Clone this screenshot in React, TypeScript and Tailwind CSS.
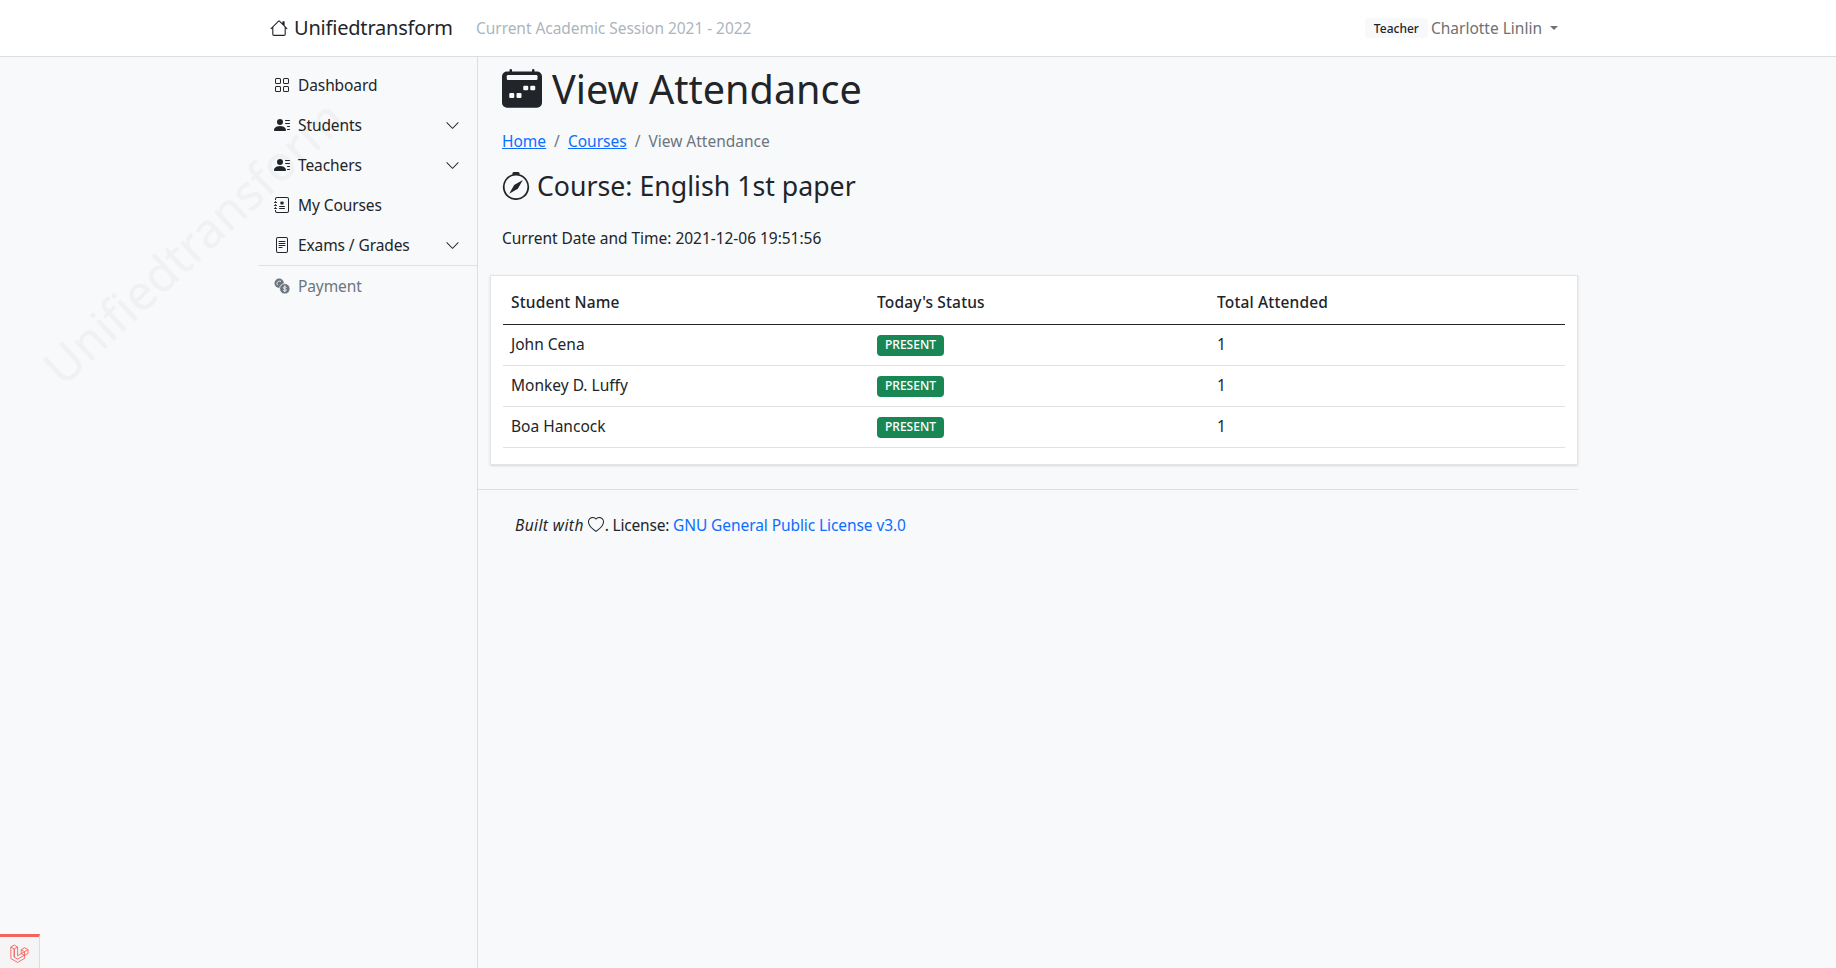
import {
  BsChevronDown,
  BsCompass,
  BsFileText,
  BsGrid,
  BsHeart,
  BsHouse,
  BsJournalMedical,
  BsPersonLinesFill,
} from "react-icons/bs";
import type { IconType } from "react-icons";

const menu: { label: string; Icon: IconType; chevron?: boolean }[] = [
  { label: "Dashboard", Icon: BsGrid },
  { label: "Students", Icon: BsPersonLinesFill, chevron: true },
  { label: "Teachers", Icon: BsPersonLinesFill, chevron: true },
  { label: "My Courses", Icon: BsJournalMedical },
  { label: "Exams / Grades", Icon: BsFileText, chevron: true },
];

const students = ["John Cena", "Monkey D. Luffy", "Boa Hancock"];

const Navbar = () => (
  <header className="h-[57px] shrink-0 bg-white border-b border-[#dcdee0]">
    <div className="w-[1320px] mx-auto h-14 flex items-center">
      <div className="flex items-center pl-3 text-[20px] text-[#212529] w-[218px]">
        <BsHouse className="w-[18px] h-[18px] text-[#212529] mr-[6px] shrink-0" />
        <span className="tracking-[-0.2px]">Unifiedtransform</span>
      </div>
      <span className="text-[#adb5bd] tracking-[-0.05px]">Current Academic Session 2021 - 2022</span>
      <div className="ml-auto flex items-center pr-[20px]">
        <span className="bg-[#f8f9fa] rounded px-[9px] pt-[2px] h-5 flex items-center text-xs font-medium text-[#212529] mr-[3px]">
          Teacher
        </span>
        <span className="text-[#6f7172]">Charlotte Linlin</span>
        <span className="ml-2 w-0 h-0 border-x-[4.8px] border-x-transparent border-t-[4.8px] border-t-[#6f7172]" />
      </div>
    </div>
  </header>
);

const CoinsIcon = () => (
  <svg viewBox="0 0 16 16" className="w-4 h-4 mr-2 shrink-0">
    <circle cx="5.2" cy="5.2" r="4.7" fill="currentColor" />
    <path fill="none" stroke="#f8f9fa" strokeWidth="0.9" strokeLinecap="round" d="M6.6 3.2A2.600 2.600 0 0 0 3 5.500c0 .6.2 1.100.5 1.500" />
    <circle cx="10.800" cy="10.800" r="5.200" fill="currentColor" stroke="#f8f9fa" strokeWidth="0.8" />
    <path fill="none" stroke="#f8f9fa" strokeWidth="0.9" strokeLinecap="round" d="M12.300 9.500c-.3-.5-.8-.8-1.500-.8-.9 0-1.500.5-1.500 1.100s.6 1 1.500 1.100 1.500.5 1.500 1.100-.6 1.100-1.500 1.100c-.7 0-1.200-.3-1.500-.8M10.800 7.900v5.800" />
  </svg>
);

const CalendarIcon = () => (
  <svg viewBox="0 0 16 16" className="w-10 h-10 mr-[10px] shrink-0">
    <path fill="currentColor" d="M3.500 0a.5.5 0 0 1 .5.5V1h8V.5a.5.5 0 0 1 1 0V1h1a2 2 0 0 1 2 2v10.500a2 2 0 0 1-2 2H2a2 2 0 0 1-2-2V3a2 2 0 0 1 2-2h1V.5a.5.5 0 0 1 .5-.5Z" />
    <rect x="1.900" y="2.400" width="12.300" height="2" rx="0.500" fill="#f8f9fa" />
    <rect x="8.500" y="6.700" width="2" height="1.800" rx="0.400" fill="#f8f9fa" />
    <rect x="11.300" y="6.700" width="2" height="1.800" rx="0.400" fill="#f8f9fa" />
    <rect x="2.900" y="9.600" width="2" height="2" rx="0.400" fill="#f8f9fa" />
    <rect x="5.800" y="9.600" width="2" height="2" rx="0.400" fill="#f8f9fa" />
  </svg>
);

const Sidebar = () => (
  <aside className="relative w-[220px] shrink-0 pt-2 border-r border-[#dcdee0]">
    {menu.map(({ label, Icon, chevron }) => (
      <div key={label} className="h-10 flex items-center pl-4 pr-[17px] text-[#212529] tracking-[-0.1px]">
        <Icon className="w-4 h-4 mr-2 shrink-0" />
        <span>{label}</span>
        {chevron && <BsChevronDown className="w-[15px] h-[15px] ml-auto" />}
      </div>
    ))}
    <div className="border-t border-[#dee2e6] h-10 flex items-center pl-4 text-[#6c757d] tracking-[-0.1px]">
      <CoinsIcon />
      <span>Payment</span>
    </div>
  </aside>
);

const AttendanceTable = () => (
  <div className="ml-3 bg-white border border-[#e3e5e7] shadow-sm px-3 pb-[16px]">
    <table className="w-full border-collapse text-left">
      <thead>
        <tr className="h-[48px] border-b border-[#212529]">
          <th className="w-[366px] px-2 pt-1 font-medium tracking-[0.15px]">Student Name</th>
          <th className="w-[340px] px-2 pt-1 font-medium tracking-[0.15px]">Today's Status</th>
          <th className="px-2 pt-1 font-medium tracking-[0.15px]">Total Attended</th>
        </tr>
      </thead>
      <tbody>
        {students.map((name) => (
          <tr key={name} className="h-[41px] border-b border-[#dee2e6]">
            <td className="px-2 pb-[2px]">{name}</td>
            <td className="px-2 pb-[2px]">
              <span className="inline-flex items-center justify-center w-[67px] h-[21px] rounded bg-[#198754] text-white text-xs font-medium">
                PRESENT
              </span>
            </td>
            <td className="px-2 pb-[2px]">1</td>
          </tr>
        ))}
      </tbody>
    </table>
  </div>
);

const LaravelMark = () => (
  <svg viewBox="0 0 24 24" className="w-[22px] h-[22px]" fill="none" stroke="#f4645f" strokeWidth="1" strokeLinejoin="round">
    <path d="M2 5.500 5.700 3.400 9.400 5.500V15l7.600-4.400" />
    <path d="M2 5.500V18l7.400 4.300 7.600-4.400v-3.600l-7.600 4.400-3.700-2.200V7.600L2 5.500Z" />
    <path d="M5.700 16.500V7.600L9.400 5.500" />
    <path d="M17 10.600 13.300 8.400V12.500L17 14.600l3.800-2.200V8.400L17 10.600V14.600" />
    <path d="M13.300 8.400 17 6.200l3.800 2.200" />
  </svg>
);

export default function App() {
  return (
    <div className="min-h-screen flex flex-col relative overflow-hidden bg-[#f8f9fa] text-[#212529] font-['Noto_Sans',sans-serif] text-[15.5px] leading-6">
      <div className="absolute left-0 top-[221px] rotate-[-43deg] w-[380px] text-center text-[48px] leading-none text-[#f0f1f2] pointer-events-none select-none whitespace-nowrap">
        Unifiedtransform
      </div>
      <Navbar />
      <div className="relative flex-1 flex w-[1320px] mx-auto">
        <Sidebar />
        <main className="w-[1100px] pt-[2px]">
          <h1 className="pl-6 flex items-center text-[39.6px] leading-[60px]">
            <CalendarIcon />
            View Attendance
          </h1>
          <nav className="pl-6 mt-[10px] flex items-center h-6">
            <a className="text-[#0d6efd] underline">Home</a>
            <span className="px-2 text-[#6c757d]">/</span>
            <a className="text-[#0d6efd] underline">Courses</a>
            <span className="px-2 text-[#6c757d]">/</span>
            <span className="text-[#6c757d]">View Attendance</span>
          </nav>
          <h4 className="pl-6 mt-[18px] flex items-center text-[26.7px] leading-[29px]">
            <BsCompass className="w-[28px] h-[28px] mr-[7px] shrink-0" />
            Course: English 1st paper
          </h4>
          <p className="pl-6 mt-[26px] tracking-[-0.03px]">Current Date and Time: 2021-12-06 19:51:56</p>
          <div className="mt-[25px]">
            <AttendanceTable />
          </div>
          <footer className="mt-6 border-t border-[#dcdee0] pt-[23px] pl-[37px] flex items-center">
            <em className="tracking-[0.4px]">Built with</em>
            <BsHeart className="w-4 h-4 ml-[4px] mr-[2px]" />
            <span className="-ml-px tracking-[-0.2px]">. License:&nbsp;</span>
            <a className="text-[#0d6efd] tracking-[-0.08px]">GNU General Public License v3.0</a>
          </footer>
        </main>
      </div>
      <div className="fixed left-0 bottom-0 w-10 h-[34px] bg-[#f5f5f5] border-t-[3px] border-t-[#f4645f] border-r border-r-[#dddddd] flex items-center justify-center">
        <LaravelMark />
      </div>
    </div>
  );
}
